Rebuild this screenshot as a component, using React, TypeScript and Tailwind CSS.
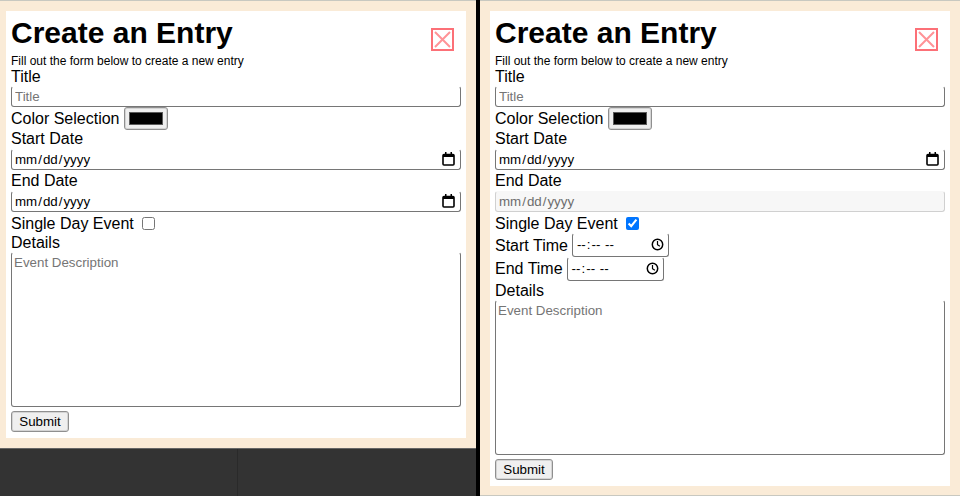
import React from "react";

const inputCls = "block w-full h-[21px] border border-[#767676] border-t-transparent rounded-[3px] px-[3px] text-[13.33px] bg-white placeholder:text-[#757575] outline-none [&::-webkit-calendar-picker-indicator]:opacity-0";

function Close() {
  return (
    <svg width="23" height="23" viewBox="0 0 23 23" className="block" fill="none">
      <rect x="1" y="1" width="21" height="21" strokeWidth="2" stroke="#fc7077" />
      <path d="M4 4 L19 19 M19 4 L4 19" strokeWidth="2" stroke="#ff9397" />
    </svg>
  );
}

function CalendarIcon() {
  return (
    <svg width="13" height="14" viewBox="0 0 13 14" className="absolute right-[6px] top-[3px] pointer-events-none" fill="none">
      <path d="M3 0h1.5v2H3zM8.5 0H10v2H8.5z" fill="#000" />
      <rect x="1" y="2.5" width="11" height="10.5" rx="1" stroke="#000" strokeWidth="1.6" />
      <rect x="1" y="2" width="11" height="3" fill="#000" />
    </svg>
  );
}

function ClockIcon() {
  return (
    <svg width="13" height="13" viewBox="0 0 13 13" className="absolute right-[5px] top-[5px] pointer-events-none" fill="none" stroke="#000">
      <circle cx="6.5" cy="6.5" r="5.2" strokeWidth="1.5" />
      <path d="M6.5 3v3.7l2.4 1.6" strokeWidth="1.2" />
    </svg>
  );
}

function DateField() {
  return (
    <div className="relative">
      <input type="date" className={inputCls + " pl-[2px]"} />
      <CalendarIcon />
    </div>
  );
}

function TimeField() {
  return (
    <div className="relative ml-[4px]">
      <input type="time" className="block w-[97px] h-[24px] border border-[#767676] border-t-transparent rounded-[3px] px-[3px] text-[13.33px] outline-none [&::-webkit-calendar-picker-indicator]:opacity-0" />
      <ClockIcon />
    </div>
  );
}

function Color() {
  return (
    <button type="button" className="w-[44px] h-[23px] border border-[#8f8f8f] rounded-[3px] bg-[#efefef] shadow-[inset_0_0_0_1px_#d4d4d4] flex items-center justify-center">
      <span className="block w-[34px] h-[13px] bg-black border border-[#5a5a5a]" />
    </button>
  );
}

function Form({ single }: { single: boolean }) {
  return (
    <div className="bg-white h-full px-[5px] pt-[4px] flex flex-col items-stretch">
      <div className="flex justify-between">
        <div>
          <h1 className="text-[30px] leading-[37px] font-bold text-black -mt-px">Create an Entry</h1>
          <p className="text-[12px] leading-[14px] mt-[3px] text-black">Fill out the form below to create a new entry</p>
        </div>
        <div className="pr-[7px] pt-[13px]"><Close /></div>
      </div>
      <label className="text-[16px] leading-[18px] block">Title</label>
      <input className={inputCls} placeholder="Title" />
      <div className="flex items-center h-[23px] text-[16px] leading-[18px]">
        <span>Color Selection</span>
        <span className="ml-[4px]"><Color /></span>
      </div>
      <label className="text-[16px] leading-[18px] block">Start Date</label>
      <div className="mt-px"><DateField /></div>
      <label className="text-[16px] leading-[18px] block mt-[2px]">End Date</label>
      <div className="mt-px">
        {single ? (
          <input type="date" disabled className="block w-full h-[21px] border border-[#d0d0d0] border-t-transparent rounded-[3px] px-[3px] pl-[2px] text-[13.33px] bg-[#f7f7f7] text-[#6d6d6d] outline-none [&::-webkit-calendar-picker-indicator]:opacity-0" />
        ) : (
          <DateField />
        )}
      </div>
      <div className="flex items-center h-[20px] mt-[2px] text-[16px]">
        <span>Single Day Event</span>
        <input type="checkbox" defaultChecked={single} className="ml-[8px] w-[13px] h-[13px] -mt-px appearance-auto" />
      </div>
      {single && (
        <div className="-mt-px mb-px">
          <div className="flex items-center h-[24px] text-[16px]">
            <span className="mt-[2px]">Start Time</span>
            <TimeField />
          </div>
          <div className="flex items-center h-[24px] text-[16px]">
            <span>End Time</span>
            <TimeField />
          </div>
        </div>
      )}
      <label className="text-[16px] leading-[18px] block">Details</label>
      <textarea className="block w-full h-[155px] border border-[#767676] border-t-transparent rounded-[3px] px-[2px] py-0 text-[13.33px] placeholder:text-[#757575] outline-none resize-none" placeholder="Event Description" />
      <button type="button" className="mt-[4px] w-[58px] h-[21px] border border-[#8f8f8f] rounded-[3px] bg-[#efefef] shadow-[inset_0_0_0_1px_#d4d4d4] text-[13.33px] leading-none">Submit</button>
    </div>
  );
}

export default function App() {
  return (
    <div className="w-[960px] h-[496px] flex bg-black overflow-hidden" style={{ fontFamily: '"Liberation Sans", Arial, sans-serif' }}>
      <div className="w-[476px] flex flex-col border-t border-[#c8c8c0]">
        <div className="h-[447px] bg-[#faebd7] pl-[6px] pr-[10px] pt-[10px] pb-[10px]">
          <Form single={false} />
        </div>
        <div className="flex-1 flex bg-[#333333] border-t border-[#666]">
          <div className="w-[238px] border-r border-[#2a2a2a]" />
        </div>
      </div>
      <div className="w-[480px] ml-[4px] h-full bg-[#faebd7] border-y border-[#c8c8c0] pl-[10px] pr-[10px] pt-[10px] pb-[9px]">
        <Form single />
      </div>
    </div>
  );
}
